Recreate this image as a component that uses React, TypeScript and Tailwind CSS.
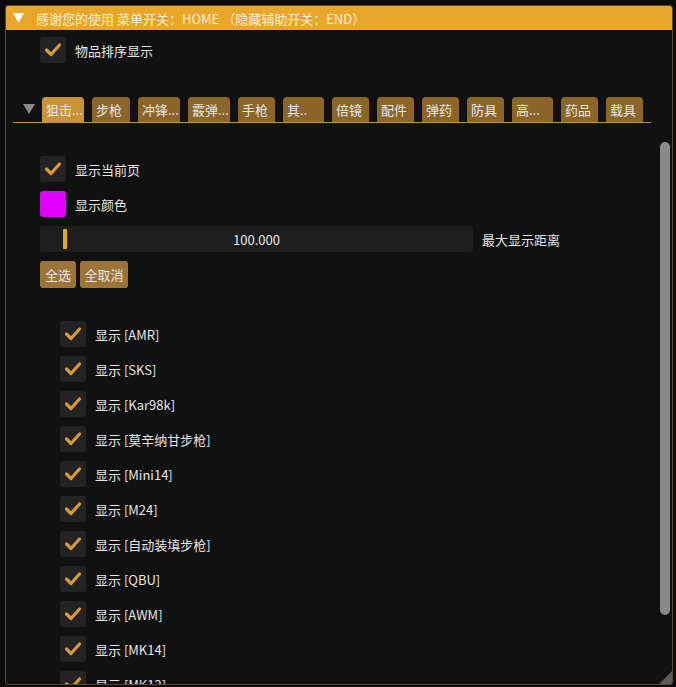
import React from 'react';

const tabs = [
  { label: '狙击...', w: 'w-[42px]', active: true },
  { label: '步枪', w: 'w-[38px]' },
  { label: '冲锋...', w: 'w-[42px]' },
  { label: '霰弹...', w: 'w-[42px]' },
  { label: '手枪', w: 'w-[37px]' },
  { label: '其..', w: 'w-[41px]' },
  { label: '倍镜', w: 'w-[37px]' },
  { label: '配件', w: 'w-[37px]' },
  { label: '弹药', w: 'w-[37px]' },
  { label: '防具', w: 'w-[37px]' },
  { label: '高...', w: 'w-[41px]' },
  { label: '药品', w: 'w-[37px]' },
  { label: '载具', w: 'w-[37px]' },
];

const items = ['AMR', 'SKS', 'Kar98k', '莫辛纳甘步枪', 'Mini14', 'M24', '自动装填步枪', 'QBU', 'AWM', 'MK14', 'MK12'];

function Check() {
  return (
    <div className="flex h-[26px] w-[26px] shrink-0 items-center justify-center rounded-[3px] bg-[#232323]">
      <svg width="26" height="26" viewBox="0 0 26 26">
        <polyline points="6.5,13 11,17.5 19.5,8" fill="none" stroke="#D99A35" strokeWidth="3.2" strokeLinecap="round" strokeLinejoin="round" />
      </svg>
    </div>
  );
}

function Row({ children, label }: { children: React.ReactNode; label: string }) {
  return (
    <div className="flex h-[26px] items-center gap-[9px]">
      {children}
      <span className="leading-none">{label}</span>
    </div>
  );
}

export default function App() {
  return (
    <div className="h-[687px] w-[676px] overflow-hidden bg-[#0b0b0b] pl-[5px] pt-[5px] font-['Noto_Sans_CJK_SC',sans-serif] text-[13px] text-[#e6e6e6]">
      <div className="relative flex h-[680px] w-[668px] flex-col overflow-hidden rounded-[3px] border border-[#5e4a2c] bg-[#111111]">
        {/* 标题栏 */}
        <div className="flex h-[24px] shrink-0 items-center gap-[12px] bg-[#E8A628] pl-[7px] text-[#f8eedb]">
          <svg width="11" height="10" viewBox="0 0 11 10">
            <polygon points="0,0 11,0 5.5,10" fill="#ffffff" />
          </svg>
          <span className="leading-none">感谢您的使用 菜单开关：HOME （隐藏辅助开关：END）</span>
        </div>

        <div className="pl-[34px] pt-[7px]">
          <Row label="物品排序显示">
            <Check />
          </Row>
        </div>

        {/* 标签栏 */}
        <div className="ml-[7px] mr-[21px] mt-[34px] flex items-end border-b border-[#C8913A]">
          <div className="flex w-[29px] items-center justify-center self-center pb-[2px] pl-[2px]">
            <svg width="12" height="10" viewBox="0 0 12 10">
              <polygon points="0,0 12,0 6,10" fill="#8a8a8a" />
            </svg>
          </div>
          <div className="flex gap-2">
            {tabs.map(t => (
              <div
                key={t.label}
                className={`${t.w} flex h-[25px] items-center rounded-t-[4px] px-[4px] leading-none whitespace-nowrap ${t.active ? 'bg-[#C8913A]' : 'bg-[#8C6529]'}`}
              >
                {t.label}
              </div>
            ))}
          </div>
        </div>

        {/* 内容区 */}
        <div className="flex min-h-0 flex-1">
          <div className="flex-1 overflow-hidden pl-[34px] pt-[33px]">
            <div className="flex flex-col gap-[9px]">
              <Row label="显示当前页">
                <Check />
              </Row>
              <Row label="显示颜色">
                <div className="h-[26px] w-[26px] rounded-[3px] bg-[#E100FF]" />
              </Row>
              <div className="flex h-[26px] items-center gap-[9px]">
                <div className="relative flex h-[26px] w-[433px] items-center justify-center rounded-[3px] bg-[#1e1e1e]">
                  <div className="absolute left-[23px] top-[3px] h-[20px] w-[4px] rounded-[1px] bg-[#E8A628]" />
                  <span className="leading-none">100.000</span>
                </div>
                <span className="leading-none">最大显示距离</span>
              </div>
              <div className="flex gap-[4px]">
                <div className="flex h-[27px] w-[36px] items-center justify-center rounded-[3px] bg-[#9C7439] leading-none">全选</div>
                <div className="flex h-[27px] w-[48px] items-center justify-center rounded-[3px] bg-[#9C7439] leading-none">全取消</div>
              </div>
            </div>

            <div className="mt-[33px] flex flex-col gap-[9px] pl-[20px]">
              {items.map(name => (
                <Row key={name} label={`显示 [${name}]`}>
                  <Check />
                </Row>
              ))}
            </div>
          </div>

          {/* 滚动条 */}
          <div className="w-[12px] shrink-0 pt-[19px]">
            <div className="h-[473px] w-[10px] rounded-full bg-[#8a8a8a]" />
          </div>
        </div>

        {/* 缩放手柄 */}
        <svg className="absolute bottom-0 right-0" width="13" height="13" viewBox="0 0 13 13">
          <polygon points="13,0 13,13 0,13" fill="#5a5a5a" />
        </svg>
      </div>
    </div>
  );
}
